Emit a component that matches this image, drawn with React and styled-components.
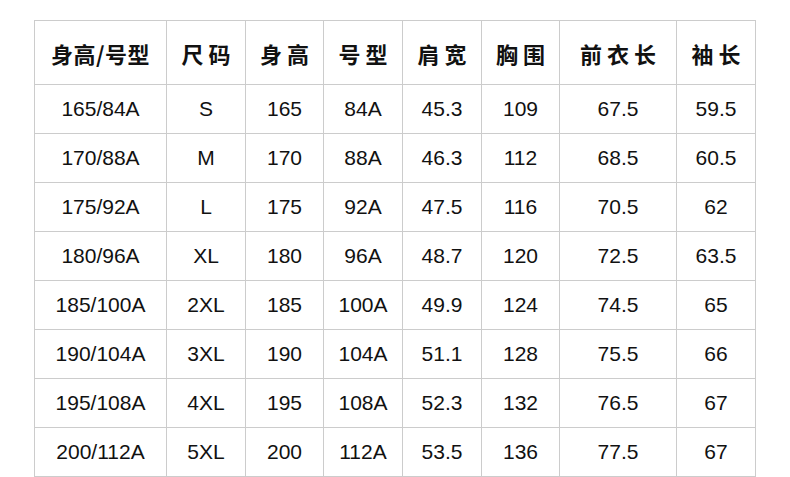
import styled, { createGlobalStyle } from 'styled-components'

const GlobalStyle = createGlobalStyle`
  body {
    margin: 0;
    background: #fff;
  }
`;

const Page = styled.div`
  padding: 20px 0 0 34px;
  background: #fff;
`;

const Grid = styled.div`
  display: grid;
  grid-template-columns: 131px 78px 77px 78px 78px 77px 116px 78px;
  grid-template-rows: 63px repeat(8, 48px);
  gap: 1px;
  padding: 1px;
  width: max-content;
  background: #cccccc;
`;

const HeadCell = styled.div`
  display: flex;
  align-items: center;
  justify-content: center;
  padding-top: 0;
  background: #fff;
  color: #111;
  font-family: "Noto Sans CJK SC", sans-serif;
  font-weight: 700;
  font-size: 22px;
  letter-spacing: ${p => p.$spread ? '5px' : '0.5px'};
  text-indent: ${p => p.$spread ? '5px' : '0'};
`;

const Cell = styled.div`
  display: flex;
  align-items: center;
  justify-content: center;
  background: #fff;
  color: #111;
  font-family: "Liberation Sans", Arial, sans-serif;
  font-size: 21px;
`;

const headers = [
  { label: '身高/号型' },
  { label: '尺码', spread: true },
  { label: '身高', spread: true },
  { label: '号型', spread: true },
  { label: '肩宽', spread: true },
  { label: '胸围', spread: true },
  { label: '前衣长', spread: true },
  { label: '袖长', spread: true },
];

const rows = [
  ['165/84A', 'S', '165', '84A', '45.3', '109', '67.5', '59.5'],
  ['170/88A', 'M', '170', '88A', '46.3', '112', '68.5', '60.5'],
  ['175/92A', 'L', '175', '92A', '47.5', '116', '70.5', '62'],
  ['180/96A', 'XL', '180', '96A', '48.7', '120', '72.5', '63.5'],
  ['185/100A', '2XL', '185', '100A', '49.9', '124', '74.5', '65'],
  ['190/104A', '3XL', '190', '104A', '51.1', '128', '75.5', '66'],
  ['195/108A', '4XL', '195', '108A', '52.3', '132', '76.5', '67'],
  ['200/112A', '5XL', '200', '112A', '53.5', '136', '77.5', '67'],
];

const App = () => (
  <>
    <GlobalStyle />
    <Page>
      <Grid>
        {headers.map(h => (
          <HeadCell key={h.label} $spread={h.spread}>{h.label}</HeadCell>
        ))}
        {rows.map(row =>
          row.map((v, i) => <Cell key={row[0] + i}>{v}</Cell>)
        )}
      </Grid>
    </Page>
  </>
)

export default App
